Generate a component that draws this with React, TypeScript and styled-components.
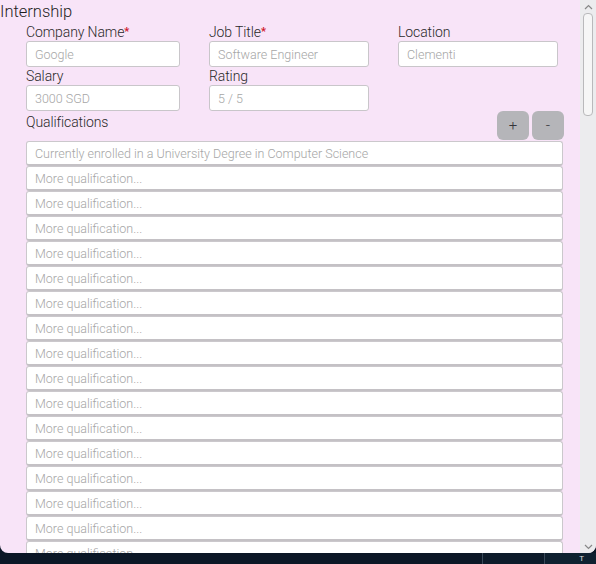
import React from "react";
import styled, { createGlobalStyle } from "styled-components";

const Global = createGlobalStyle`
  html, body { margin: 0; padding: 0; background: #0b1726; }
  body { font-family: Roboto, "Liberation Sans", sans-serif; overflow: hidden; }
  * { box-sizing: border-box; }
`;

const Screen = styled.div`
  width: 596px;
  height: 564px;
  display: flex;
  flex-direction: column;
  background: #0b1726;
`;

const Window = styled.div`
  height: 553px;
  flex-shrink: 0;
  display: flex;
  background: #f8e4f8;
  border-radius: 0 0 8px 8px;
  overflow: hidden;
`;

const Content = styled.div`
  width: 580px;
  height: 553px;
  overflow: hidden;
  color: #2a2a2a;
`;

const Title = styled.div`
  font-size: 16.5px;
  font-weight: 300;
  line-height: 23px;
  height: 23px;
  color: #1e1e1e;
`;

const Form = styled.div`
  padding-left: 26px;
  padding-right: 16px;
`;

const FieldGrid = styled.div`
  display: grid;
  grid-template-columns: 154px 160px 160px;
  column-gap: 29px;
`;

const Field = styled.div`
  display: flex;
  flex-direction: column;
`;

const Label = styled.label`
  font-size: 14px;
  font-weight: 300;
  line-height: 18px;
  height: 18px;
  letter-spacing: -0.1px;
`;

const Star = styled.span`
  color: #d0162a;
  font-weight: 700;
  font-size: 11px;
  vertical-align: 2px;
`;

const TextInput = styled.input`
  width: 100%;
  height: 26px;
  border: 1px solid #c9c6ca;
  border-radius: 3px;
  background: #fff;
  padding: 0 8px;
  font-family: inherit;
  font-size: 12.5px;
  font-weight: 300;
  outline: none;
  &::placeholder { color: #a6a6a6; }
`;

const QualHeader = styled.div`
  display: flex;
  justify-content: space-between;
  align-items: flex-start;
  height: 30px;
`;

const QualLabel = styled(Label)`
  margin-top: 2px;
`;

const Buttons = styled.div`
  display: flex;
  gap: 3px;
`;

const SmallButton = styled.button`
  width: 32px;
  height: 29px;
  border: none;
  border-radius: 6px;
  background: #b5b5b9;
  color: #34343a;
  font-family: inherit;
  font-size: 15px;
  font-weight: 300;
  line-height: 29px;
  padding: 0;
`;

const QualList = styled.div`
  display: flex;
  flex-direction: column;
  width: 537px;
`;

const QualInput = styled.input`
  width: 100%;
  height: 25px;
  flex-shrink: 0;
  border: 1px solid #cbc8cc;
  border-bottom: 2px solid #c4c1c5;
  border-radius: 3px;
  background: #fff;
  padding: 0 8px;
  font-family: inherit;
  font-size: 12.5px;
  font-weight: 300;
  outline: none;
  &::placeholder { color: #a6a6a6; }
`;

const ScrollBar = styled.div`
  width: 16px;
  height: 553px;
  background: #ececee;
  display: flex;
  flex-direction: column;
  align-items: center;
`;

const Arrow = styled.div`
  height: 13px;
  display: flex;
  align-items: center;
  justify-content: center;
`;

const Thumb = styled.div`
  width: 10px;
  height: 103px;
  border: 1px solid #b9b9bb;
  border-radius: 4px;
  background: #f6f6f6;
`;

const Spacer = styled.div`
  flex: 1;
`;

const Taskbar = styled.div`
  height: 11px;
  display: flex;
  overflow: hidden;
`;

const TaskSeg = styled.div<{ $w: number; $bg: string }>`
  width: ${(p) => p.$w}px;
  background: ${(p) => p.$bg};
  border-right: 1px solid #3a4a5a;
`;

const TaskRest = styled.div`
  flex: 1;
  background: #0f2130;
  color: #ddd;
  font-size: 8px;
  text-align: right;
  padding-right: 12px;
  line-height: 11px;
`;

const qualCount = 17;

export default function App() {
  return (
    <>
      <Global />
      <Screen>
        <Window>
          <Content>
            <Title>Internship</Title>
            <Form>
              <FieldGrid>
                <Field>
                  <Label>
                    Company Name<Star>*</Star>
                  </Label>
                  <TextInput placeholder="Google" />
                </Field>
                <Field>
                  <Label>
                    Job Title<Star>*</Star>
                  </Label>
                  <TextInput placeholder="Software Engineer" />
                </Field>
                <Field>
                  <Label>Location</Label>
                  <TextInput placeholder="Clementi" />
                </Field>
                <Field>
                  <Label>Salary</Label>
                  <TextInput placeholder="3000 SGD" />
                </Field>
                <Field>
                  <Label>Rating</Label>
                  <TextInput placeholder="5 / 5" />
                </Field>
              </FieldGrid>
              <QualHeader>
                <QualLabel>Qualifications</QualLabel>
                <Buttons>
                  <SmallButton>+</SmallButton>
                  <SmallButton>-</SmallButton>
                </Buttons>
              </QualHeader>
              <QualList>
                <QualInput placeholder="Currently enrolled in a University Degree in Computer Science" />
                {Array.from({ length: qualCount }).map((_, i) => (
                  <QualInput key={i} placeholder="More qualification..." />
                ))}
              </QualList>
            </Form>
          </Content>
          <ScrollBar>
            <Arrow>
              <svg width="9" height="6" viewBox="0 0 9 6">
                <path d="M1 5 L4.5 1.5 L8 5" fill="none" stroke="#888" strokeWidth="1.2" />
              </svg>
            </Arrow>
            <Thumb />
            <Spacer />
            <Arrow>
              <svg width="9" height="6" viewBox="0 0 9 6">
                <path d="M1 1 L4.5 4.5 L8 1" fill="none" stroke="#888" strokeWidth="1.2" />
              </svg>
            </Arrow>
          </ScrollBar>
        </Window>
        <Taskbar>
          <TaskSeg $w={483} $bg="#0b1726" />
          <TaskSeg $w={62} $bg="#0d1b2a" />
          <TaskRest>T</TaskRest>
        </Taskbar>
      </Screen>
    </>
  );
}
